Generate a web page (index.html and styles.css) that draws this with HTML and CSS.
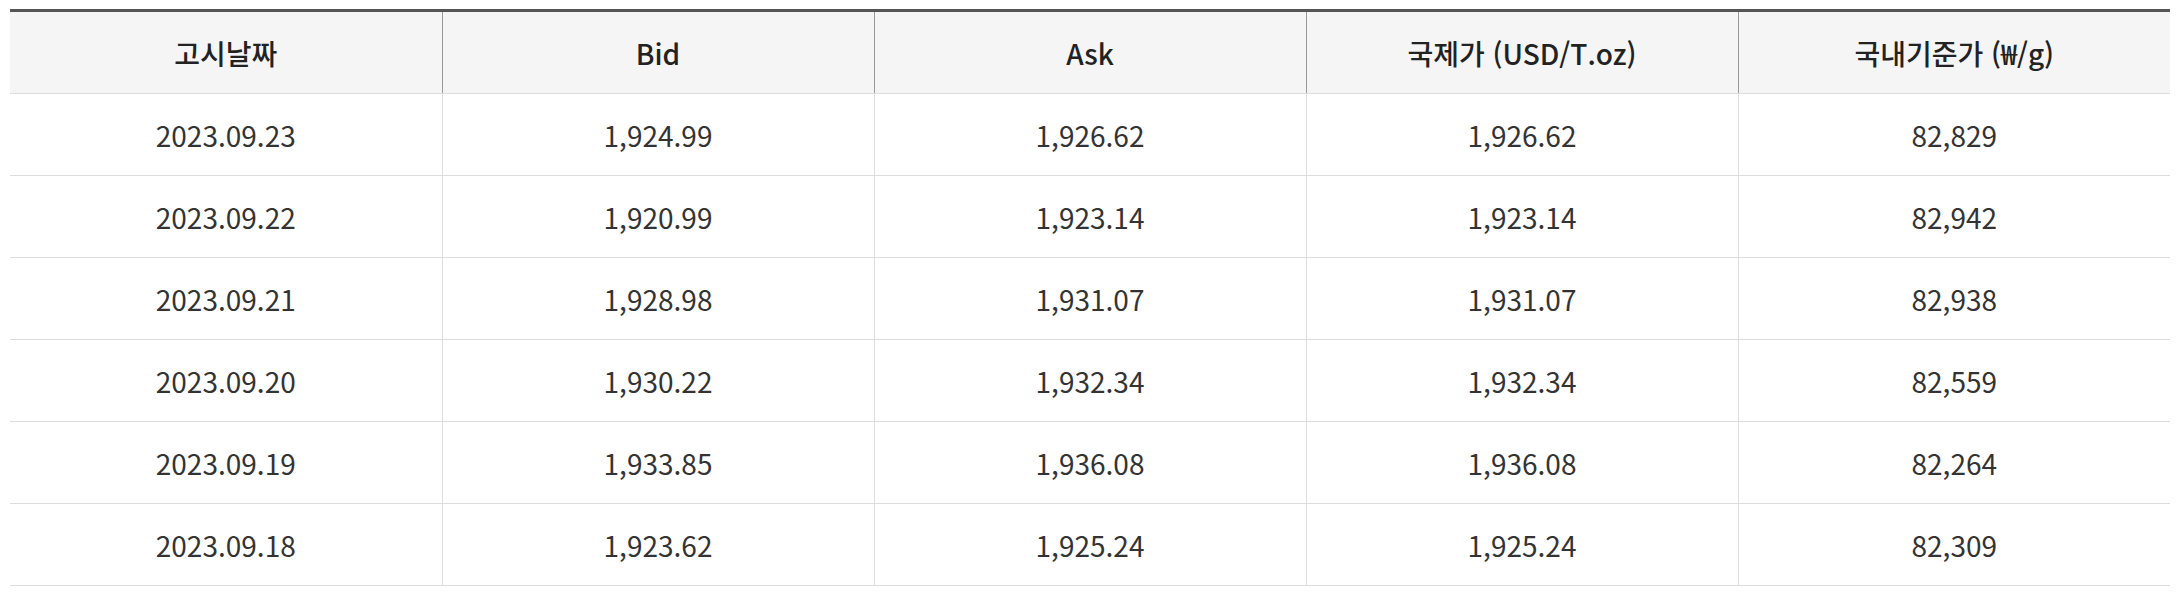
FILE: index.html
```html
<!DOCTYPE html>
<html lang="ko">
<head>
<meta charset="utf-8">
<link rel="stylesheet" href="styles.css">
</head>
<body>
<table class="price-table">
  <thead>
    <tr>
      <th>고시날짜</th>
      <th>Bid</th>
      <th>Ask</th>
      <th>국제가 (USD/T.oz)</th>
      <th>국내기준가 (₩/g)</th>
    </tr>
  </thead>
  <tbody>
    <tr><td>2023.09.23</td><td>1,924.99</td><td>1,926.62</td><td>1,926.62</td><td>82,829</td></tr>
    <tr><td>2023.09.22</td><td>1,920.99</td><td>1,923.14</td><td>1,923.14</td><td>82,942</td></tr>
    <tr><td>2023.09.21</td><td>1,928.98</td><td>1,931.07</td><td>1,931.07</td><td>82,938</td></tr>
    <tr><td>2023.09.20</td><td>1,930.22</td><td>1,932.34</td><td>1,932.34</td><td>82,559</td></tr>
    <tr><td>2023.09.19</td><td>1,933.85</td><td>1,936.08</td><td>1,936.08</td><td>82,264</td></tr>
    <tr><td>2023.09.18</td><td>1,923.62</td><td>1,925.24</td><td>1,925.24</td><td>82,309</td></tr>
  </tbody>
</table>
</body>
</html>
```
FILE: styles.css
```css
html, body {
  background: #fff;
}
body {
  margin: 9px 8px 0 10px;
  font-family: "Noto Sans CJK KR", "Noto Sans", sans-serif;
}
.price-table {
  width: 2160px;
  border-collapse: collapse;
  table-layout: fixed;
  border-top: 3px solid #555;
}
.price-table th,
.price-table td {
  text-align: center;
  padding: 0;
  font-size: 28px;
  line-height: 1;
}
.price-table th {
  height: 81px;
  background: #f5f5f5;
  color: #222;
  font-weight: 500;
  border-left: 1px solid #999;
  border-bottom: 1px solid #ddd;
}
.price-table td {
  height: 81px;
  color: #333;
  font-weight: 400;
  border-left: 1px solid #ddd;
  border-bottom: 1px solid #ddd;
}
.price-table th:first-child,
.price-table td:first-child {
  border-left: none;
}
```
